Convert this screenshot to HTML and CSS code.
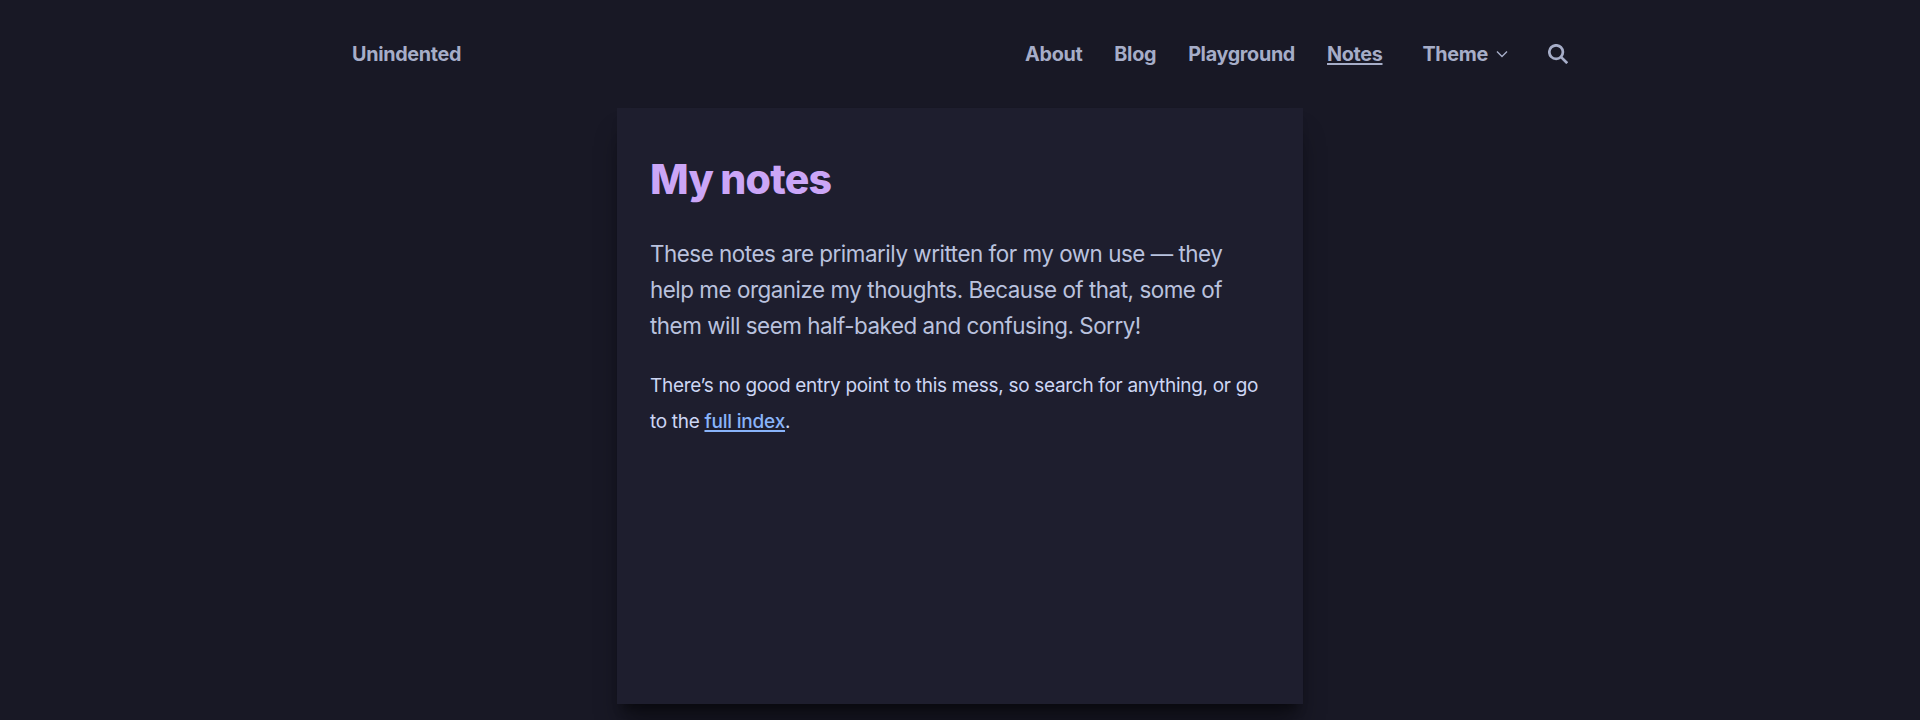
FILE: index.html
```html
<!DOCTYPE html>
<html lang="en">
<head>
<meta charset="utf-8">
<title>My notes</title>
<link rel="stylesheet" href="styles.css">
</head>
<body>
<header class="header">
<a class="brand">Unindented</a>
<nav class="nav">
<a>About</a><a>Blog</a><a>Playground</a><a class="current">Notes</a>
<button class="theme">Theme<svg class="chevron" viewBox="0 0 12 12"><path d="M1 3.5l5 5 5-5"/></svg></button>
<button class="search" aria-label="Search"><svg viewBox="0 0 20 20"><circle cx="8.1" cy="8.1" r="6.8"/><path d="M12.9 12.9l6.3 6.3"/></svg></button>
</nav>
</header>
<main class="card">
<h1>My notes</h1>
<p class="lead">These notes are primarily written for my own use — they help me organize my thoughts. Because of that, some of them will seem half-baked and confusing. Sorry!</p>
<p class="text">There’s no good entry point to this mess, so search for anything, or go to the <a class="link">full index</a>.</p>
</main>
</body>
</html>
```
FILE: styles.css
```css
* { box-sizing: border-box; }
body { margin: 0; height: 720px; overflow: hidden; background: #181825; color: #cdd6f4; font-family: Inter, sans-serif; }
.header { display: flex; justify-content: space-between; align-items: center; width: 1216px; height: 108px; margin: 0 auto; color: #a6adc8; font-size: 19.8px; font-weight: 700; letter-spacing: -0.33px; }
.nav { display: flex; align-items: center; gap: 32px; }
.current { text-decoration: underline 2px; text-underline-offset: 2px; }
button { display: flex; align-items: center; padding: 0; border: 0; background: none; color: inherit; font: inherit; letter-spacing: inherit; }
.theme { margin-left: 8px; gap: 8px; }
svg { fill: none; stroke: currentColor; }
.chevron { width: 12px; height: 12px; stroke-width: 1.4; }
.search { margin-left: 8px; }
.search svg { width: 20px; height: 20px; stroke-width: 2.7; }
.card { width: 686px; height: 596px; margin: 0 auto; padding: 46px 32px 0 33px; background: #1e1e2e; box-shadow: 0 24px 25px -5px rgba(0,0,0,.4), 0 10px 10px -6px rgba(0,0,0,.4); }
h1 { margin: 0; color: #cba6f7; font-size: 41px; font-weight: 800; line-height: 50px; letter-spacing: -0.75px; word-spacing: -1px; }
.lead { max-width: 600px; margin: 32px 0 0; color: #bac2de; font-size: 22.4px; line-height: 36px; letter-spacing: -0.47px; }
.text { margin: 24px 0 0; font-size: 19px; line-height: 36px; letter-spacing: -0.31px; }
.link { color: #89b4fa; font-weight: 500; letter-spacing: -0.2px; text-decoration: underline 2px; text-underline-offset: 2px; }
```
